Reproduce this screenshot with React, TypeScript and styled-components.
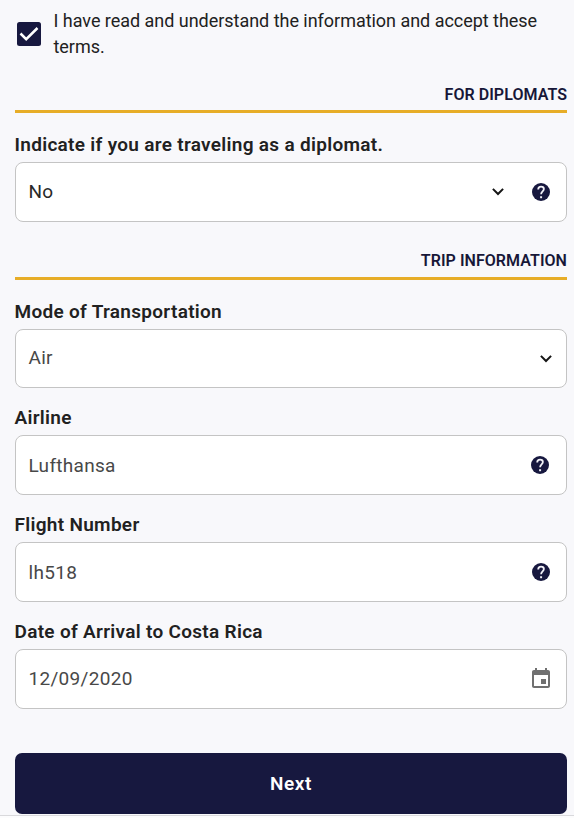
import React from 'react';
import styled, { createGlobalStyle } from 'styled-components';

const Global = createGlobalStyle`
  * { box-sizing: border-box; }
  body { margin: 0; background: #f8f8fb; font-family: Roboto, sans-serif; color: #212121; }
`;

const Page = styled.form`
  height: 818px;
  display: flex;
  flex-direction: column;
  overflow: hidden;
`;

const Content = styled.div`
  display: flex;
  flex-direction: column;
  height: 815px;
  padding: 8px 7px 0 15px;
`;

const Footer = styled.footer`
  flex: 1;
  border-top: 1px solid #d9d9dc;
  background: #fcfcfd;
`;

const Terms = styled.label`
  display: flex;
  height: 76px;
  font-size: 18px;
  line-height: 26px;
  letter-spacing: -0.03px;
`;

const Check = styled.svg`
  flex: none;
  margin: 14px 12.5px 0 2px;
`;

const SectionTitle = styled.h2<{ $height: number }>`
  margin: 0 0 18px;
  height: ${p => p.$height}px;
  padding-top: 1px;
  border-bottom: 3px solid #e7ad27;
  font-size: 16px;
  line-height: 20px;
  font-weight: 600;
  text-align: right;
  color: #171738;
  letter-spacing: 0.05px;
`;

const Field = styled.div<{ $gap: number }>`
  margin-bottom: ${p => p.$gap}px;
`;

const Label = styled.label`
  display: block;
  height: 31px;
  margin-left: -0.5px;
  padding-top: 1px;
  font-size: 19px;
  line-height: 26px;
  font-weight: 600;
  letter-spacing: 0.3px;
`;

const Control = styled.div<{ $height: number; $end?: number }>`
  display: flex;
  align-items: center;
  height: ${p => p.$height}px;
  padding: 0 ${p => p.$end ?? 16}px 0 12.5px;
  background: #fff;
  border: 1px solid #c4c4c4;
  border-radius: 8px;
`;

const Value = styled.span<{ $raised?: boolean; $dark?: boolean }>`
  flex: 1;
  padding-bottom: ${p => (p.$raised ? 2 : 0)}px;
  font-size: 19px;
  font-weight: 400;
  color: ${p => (p.$dark ? '#282828' : '#484848')};
  letter-spacing: 0.3px;
`;

const Arrow = styled.svg<{ $gap: number }>`
  margin-right: ${p => p.$gap}px;
`;

const CalendarIcon = styled.svg`
  margin-bottom: 2px;
`;

const Next = styled.button`
  height: 61px;
  flex: none;
  padding: 0;
  border: 0;
  border-radius: 7px;
  background: #17183f;
  color: #fff;
  font: 600 19px Roboto, sans-serif;
  letter-spacing: 0.6px;
`;

const Chevron = ({ gap }: { gap: number }) => (
  <Arrow $gap={gap} width="12" height="8" viewBox="0 0 12 8"><path d="m.9.9 5.100 5.100L11.100.9" fill="none" stroke="#151515" strokeWidth="2" /></Arrow>
);

const Help = () => (
  <svg width="18" height="18" viewBox="2 2 20 20"><circle cx="12" cy="12" r="10" fill="#17183f" /><path d="M8.900 9.200c0-2 1.300-3.200 3.200-3.200 1.800 0 3.100 1.100 3.100 2.700 0 2.600-3.100 2.800-3.100 5.900" fill="none" stroke="#f2f2f8" strokeWidth="2" /><path d="M11 16.700h2.200v2.200H11z" fill="#f2f2f8" /></svg>
);

const Calendar = () => (
  <CalendarIcon width="18" height="20" viewBox="3 1 18 20"><path fill="#707070" d="M17 12h-5v5h5v-5zM16 1v2H8V1H6v2H5c-1.110 0-2 .9-2 2v14c0 1.100.89 2 2 2h14c1.100 0 2-.9 2-2V5c0-1.100-.9-2-2-2h-1V1h-2zm3 18H5V8h14v11z" /></CalendarIcon>
);

export default function App() {
  return (
    <>
      <Global />
      <Page>
        <Content>
          <Terms>
            <Check width="24" height="24" viewBox="0 0 24 24"><rect width="24" height="24" rx="2.500" fill="#17183f" /><path d="m3.500 11.500 5.700 5.700L20.500 6" fill="none" stroke="#fff" strokeWidth="2.500" /></Check>
            <span>I have read and understand the information and accept these<br />terms.</span>
          </Terms>
          <SectionTitle $height={29}>FOR DIPLOMATS</SectionTitle>
          <Field $gap={28}>
            <Label>Indicate if you are traveling as a diplomat.</Label>
            <Control $height={60}><Value $raised $dark>No</Value><Chevron gap={28} /><Help /></Control>
          </Field>
          <SectionTitle $height={30}>TRIP INFORMATION</SectionTitle>
          <Field $gap={16}>
            <Label>Mode of Transportation</Label>
            <Control $height={59}><Value $raised>Air</Value><Chevron gap={-2} /></Control>
          </Field>
          <Field $gap={16}>
            <Label>Airline</Label>
            <Control $height={60} $end={17}><Value>Lufthansa</Value><Help /></Control>
          </Field>
          <Field $gap={16}>
            <Label>Flight Number</Label>
            <Control $height={60}><Value>lh518</Value><Help /></Control>
          </Field>
          <Field $gap={44}>
            <Label>Date of Arrival to Costa Rica</Label>
            <Control $height={60}><Value $raised>12/09/2020</Value><Calendar /></Control>
          </Field>
          <Next type="button">Next</Next>
        </Content>
        <Footer />
      </Page>
    </>
  );
}
